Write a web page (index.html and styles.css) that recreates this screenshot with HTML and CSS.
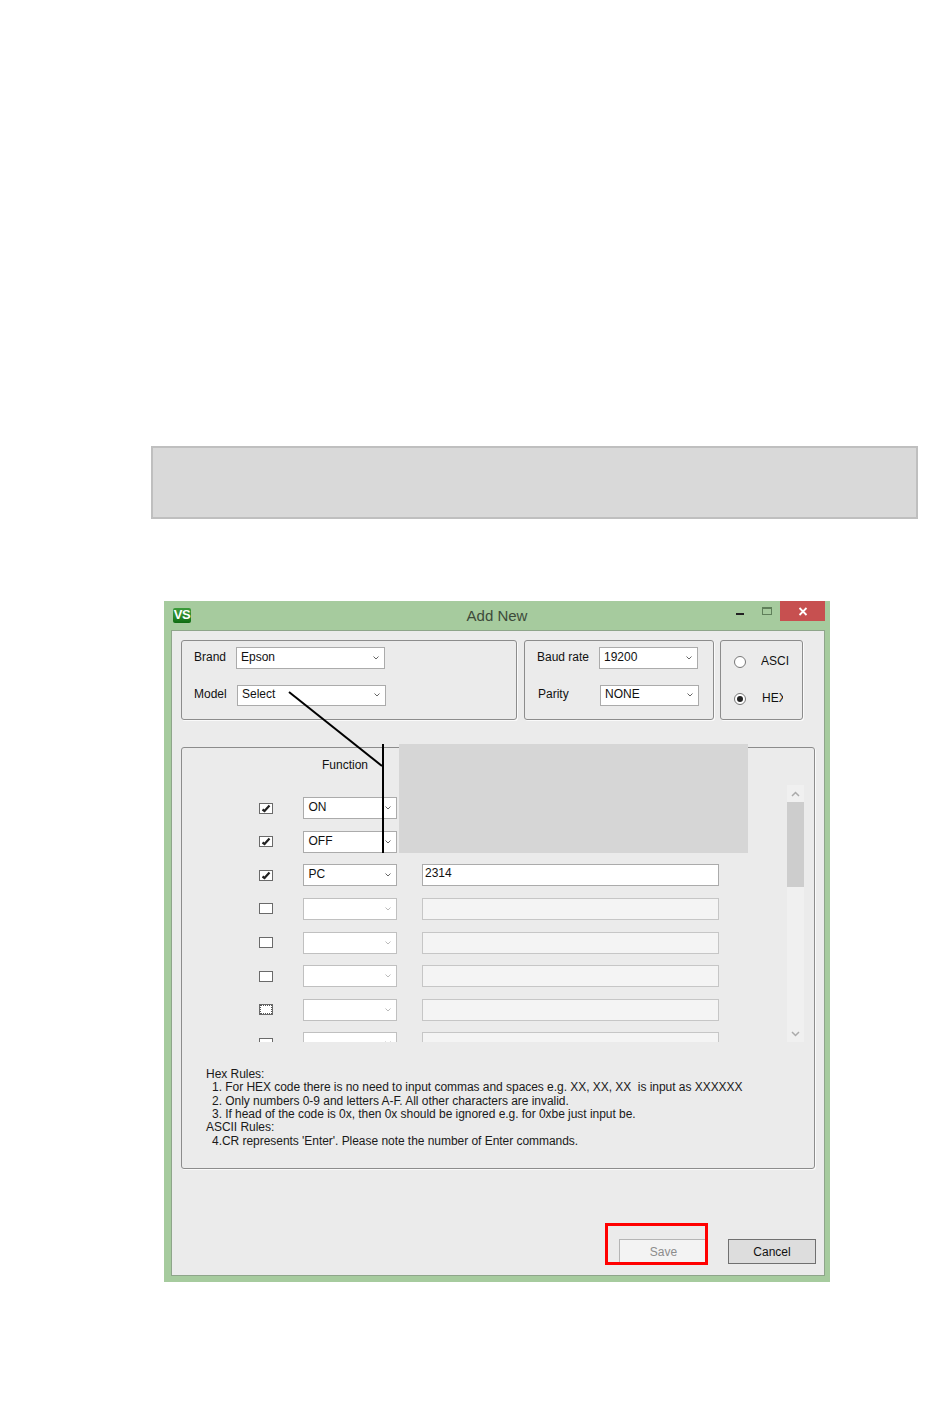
FILE: index.html
```html
<!DOCTYPE html>
<html lang="en">
<head>
<meta charset="utf-8">
<title>Add New</title>
<link rel="stylesheet" href="styles.css">
</head>
<body>
<div class="banner"></div>
<div class="window">
  <div class="titlebar">
    <div class="logo">VS</div>
    <div class="title">Add New</div>
    <div class="controls">
      <span class="ctl-min"></span>
      <span class="ctl-max"></span>
      <span class="ctl-close"><svg width="10" height="9" viewBox="0 0 10 9"><path d="M1.5 1 8.5 8M8.5 1 1.5 8" class="close-x"/></svg></span>
    </div>
  </div>
  <div class="client">
    <div class="top">
      <div class="group group-brand">
        <div class="row"><span class="label l-brand">Brand</span><div class="dd dd-brand"><span>Epson</span><svg class="chev" viewBox="0 0 6 4"><path d="M.5.5 3 3 5.5.5"/></svg></div></div>
        <div class="row row-short"><span class="label l-brand">Model</span><div class="dd dd-brand shift"><span>Select</span><svg class="chev" viewBox="0 0 6 4"><path d="M.5.5 3 3 5.5.5"/></svg></div></div>
      </div>
      <div class="group group-baud">
        <div class="row"><span class="label l-baud">Baud rate</span><div class="dd dd-baud"><span>19200</span><svg class="chev" viewBox="0 0 6 4"><path d="M.5.5 3 3 5.5.5"/></svg></div></div>
        <div class="row row-short shift"><span class="label l-baud">Parity</span><div class="dd dd-baud"><span>NONE</span><svg class="chev" viewBox="0 0 6 4"><path d="M.5.5 3 3 5.5.5"/></svg></div></div>
      </div>
      <div class="group group-mode">
        <div class="radio-row"><span class="radio"></span><span class="radio-label clip-ascii">ASCII</span></div>
        <div class="radio-row"><span class="radio on"></span><span class="radio-label clip-hex">HEX</span></div>
      </div>
    </div>
    <div class="group group-main">
      <div class="heading">Function</div>
      <div class="pane">
        <div class="list">
          <div class="line">
            <span class="check"><svg viewBox="0 0 12 9"><path d="M2.5 5.5 4.5 7 9.5 1.5" class="tick"/></svg></span>
            <div class="dd dd-row"><span>ON</span><svg class="chev" viewBox="0 0 6 4"><path d="M.5.5 3 3 5.5.5"/></svg></div>
          </div>
          <div class="line">
            <span class="check"><svg viewBox="0 0 12 9"><path d="M2.5 5.5 4.5 7 9.5 1.5" class="tick"/></svg></span>
            <div class="dd dd-row"><span>OFF</span><svg class="chev" viewBox="0 0 6 4"><path d="M.5.5 3 3 5.5.5"/></svg></div>
          </div>
          <div class="line">
            <span class="check"><svg viewBox="0 0 12 9"><path d="M2.5 5.5 4.5 7 9.5 1.5" class="tick"/></svg></span>
            <div class="dd dd-row"><span>PC</span><svg class="chev" viewBox="0 0 6 4"><path d="M.5.5 3 3 5.5.5"/></svg></div>
            <div class="field">2314</div>
          </div>
          <div class="line">
            <span class="check"></span>
            <div class="dd dd-row off"><svg class="chev" viewBox="0 0 6 4"><path d="M.5.5 3 3 5.5.5"/></svg></div>
            <div class="field off"></div>
          </div>
          <div class="line">
            <span class="check"></span>
            <div class="dd dd-row off"><svg class="chev" viewBox="0 0 6 4"><path d="M.5.5 3 3 5.5.5"/></svg></div>
            <div class="field off"></div>
          </div>
          <div class="line">
            <span class="check"></span>
            <div class="dd dd-row off"><svg class="chev" viewBox="0 0 6 4"><path d="M.5.5 3 3 5.5.5"/></svg></div>
            <div class="field off"></div>
          </div>
          <div class="line">
            <span class="check focus"></span>
            <div class="dd dd-row off"><svg class="chev" viewBox="0 0 6 4"><path d="M.5.5 3 3 5.5.5"/></svg></div>
            <div class="field off"></div>
          </div>
          <div class="line">
            <span class="check"></span>
            <div class="dd dd-row off"><svg class="chev" viewBox="0 0 6 4"><path d="M.5.5 3 3 5.5.5"/></svg></div>
            <div class="field off"></div>
          </div>
        </div>
        <div class="scrollbar">
          <div class="sb-btn"><svg viewBox="0 0 9 6"><path d="M1 5 4.5 1.5 8 5"/></svg></div>
          <div class="sb-thumb"></div>
          <div class="sb-track"></div>
          <div class="sb-btn"><svg viewBox="0 0 9 6"><path d="M1 1 4.5 4.5 8 1"/></svg></div>
        </div>
      </div>
      <div class="rules">
        <div>Hex Rules:</div>
        <div class="rule">1. For HEX code there is no need to input commas and spaces e.g. XX, XX, XX&nbsp; is input as XXXXXX</div>
        <div class="rule">2. Only numbers 0-9 and letters A-F. All other characters are invalid.</div>
        <div class="rule">3. If head of the code is 0x, then 0x should be ignored e.g. for 0xbe just input be.</div>
        <div>ASCII Rules:</div>
        <div class="rule">4.CR represents 'Enter'. Please note the number of Enter commands.</div>
      </div>
    </div>
    <div class="footer">
      <div class="btn btn-save">Save</div>
      <div class="btn btn-cancel">Cancel</div>
    </div>
  </div>
  <div class="mask"></div>
  <svg class="marks" viewBox="0 0 666 681"><path d="M125 91 218 165"/><path d="M219 143V252"/></svg>
  <div class="highlight"></div>
</div>
</body>
</html>
```
FILE: styles.css
```css
* { box-sizing: border-box; }
html, body { margin: 0; padding: 0; background: #fff; }
body {
  width: 950px;
  height: 1402px;
  overflow: hidden;
  padding-top: 446px;
  font: 12px/14px "Liberation Sans", Arial, sans-serif;
  color: #111;
}
.banner {
  width: 767px;
  height: 73px;
  margin-left: 151px;
  background: #d9d9d9;
  border: 2px solid #bfbfbf;
}
.window {
  position: relative;
  width: 666px;
  height: 681px;
  margin: 82px 0 0 164px;
  background: #a6cb9e;
  display: flex;
  flex-direction: column;
}
.titlebar {
  height: 29px;
  padding: 0 5px;
  display: grid;
  grid-template-columns: 1fr auto 1fr;
}
.logo {
  width: 18px;
  height: 15px;
  margin: 7px 0 0 4px;
  border-radius: 2px;
  background: linear-gradient(#3a9a3a 0, #2b8a2b 55%, #0f6b12 100%);
  color: #fff;
  font: bold 13px/14px "Liberation Sans", Arial, sans-serif;
  letter-spacing: -0.5px;
  text-align: center;
}
.title {
  font-size: 15px;
  line-height: 30px;
  color: #3d4a3a;
}
.controls { display: flex; justify-content: flex-end; align-items: flex-start; }
.ctl-min { width: 8px; height: 2px; margin: 12px 18px 0 0; background: #222; }
.ctl-max { width: 10px; height: 8px; margin: 6px 8px 0 0; border: 1px solid #5f7f5a; border-top-width: 2px; }
.ctl-close {
  width: 45px;
  height: 20px;
  background: #c75050;
  display: flex;
  align-items: center;
  justify-content: center;
}
.close-x { fill: none; stroke: #fff; stroke-width: 1.8; }
.client {
  flex: 1;
  margin: 0 5px 6px 7px;
  padding: 9px 9px 0;
  background: #ebebeb;
  border: 1px solid #8ea58a;
}
.top { display: flex; gap: 7px; height: 80px; }
.group {
  border: 1px solid #8c8c8c;
  border-radius: 3px;
  background: #ebebeb;
  box-shadow: 1px 1px 0 #fafafa;
}
.group-brand { width: 336px; padding: 6px 0 0 12px; }
.group-baud { width: 190px; padding: 6px 0 0 12px; }
.group-mode { width: 83px; margin-left: -1px; padding: 14px 0 0 13px; }
.row { display: flex; align-items: center; height: 22px; margin-bottom: 16px; }
.row-short { height: 21px; }
.row-short .dd { height: 21px; padding-bottom: 3px; }
.row-short .label { padding-bottom: 4px; }
.shift { margin-left: 1px; }
.label { color: #111; padding-bottom: 2px; }
.l-brand { width: 42px; }
.l-baud { width: 62px; }
.dd {
  height: 22px;
  background: #fff;
  border: 1px solid #ababab;
  padding: 0 5px 2px 4px;
  display: flex;
  align-items: center;
  justify-content: space-between;
  color: #111;
}
.dd-brand { width: 149px; }
.dd-baud { width: 99px; }
.dd-row { width: 94px; }
.dd-row span { margin-left: 0.5px; }
.chev {
  width: 6px;
  height: 4px;
  margin: 2px 0 0 auto;
  fill: none;
  stroke: #666;
  stroke-width: 1;
}
.dd.off { border-color: #c0c0c0; }
.dd.off .chev { stroke: #bbb; }
.radio-row { display: flex; align-items: center; height: 14px; margin-bottom: 23px; }
.radio {
  width: 12px;
  height: 12px;
  flex: none;
  border: 1px solid #777;
  border-radius: 50%;
  background: #fff;
  display: flex;
  align-items: center;
  justify-content: center;
}
.radio.on::after {
  content: "";
  width: 6px;
  height: 6px;
  border-radius: 50%;
  background: #222;
}
.radio-label { margin-left: 15px; overflow: hidden; white-space: nowrap; padding-bottom: 2px; }
.clip-ascii { width: 28px; }
.clip-hex { width: 21px; margin-left: 16px; }
.group-main { width: 634px; height: 422px; margin-top: 27px; }
.heading { height: 37px; padding: 10px 0 0 140px; }
.pane { display: flex; height: 257px; width: 622px; overflow: hidden; }
.list { width: 605px; padding: 6.4px 0 0 77px; display: grid; grid-auto-rows: 33.6px; }
.line { display: flex; align-items: center; }
.check {
  width: 14px;
  height: 11px;
  flex: none;
  margin-right: 30px;
  border: 1px solid #6a6a6a;
  background: #fff;
  display: flex;
}
.check svg { width: 12px; height: 9px; }
.tick { fill: none; stroke: #222; stroke-width: 2.2; }
.check.focus { outline: 1px dotted #555; outline-offset: -2px; }
.field {
  width: 297px;
  height: 22px;
  margin-left: 25px;
  padding: 1px 0 0 2px;
  background: #fff;
  border: 1px solid #ababab;
}
.field.off { background: #f4f4f4; border-color: #c6c6c6; }
.scrollbar { width: 17px; display: flex; flex-direction: column; background: #f0f0f0; }
.sb-btn { height: 17px; display: flex; align-items: center; justify-content: center; }
.sb-btn svg { width: 9px; height: 6px; fill: none; stroke: #aaa; stroke-width: 1.5; }
.sb-thumb { height: 85px; background: #cdcdcd; }
.sb-track { flex: 1; }
.rules { margin-top: 25.6px; padding-left: 24px; line-height: 13.45px; color: #1a1a1a; letter-spacing: -0.04px; }
.rule { padding-left: 6px; white-space: nowrap; }
.footer { display: flex; justify-content: flex-end; gap: 20px; margin: 70px -1px 0 0; }
.btn { height: 25px; text-align: center; line-height: 24px; border: 1px solid; }
.btn-save { width: 89px; background: #f3f3f3; border-color: #b5b5b5; color: #8c8c8c; }
.btn-cancel { width: 88px; background: #dddddd; border-color: #707070; color: #111; }
.mask {
  position: absolute;
  left: 235px;
  top: 143px;
  width: 349px;
  height: 109px;
  background: #d6d6d6;
}
.marks {
  position: absolute;
  left: 0;
  top: 0;
  width: 666px;
  height: 681px;
  pointer-events: none;
  fill: none;
  stroke: #000;
  stroke-width: 2;
}
.highlight {
  position: absolute;
  left: 441px;
  top: 622px;
  width: 103px;
  height: 42px;
  border: 3px solid #f00;
}
```
